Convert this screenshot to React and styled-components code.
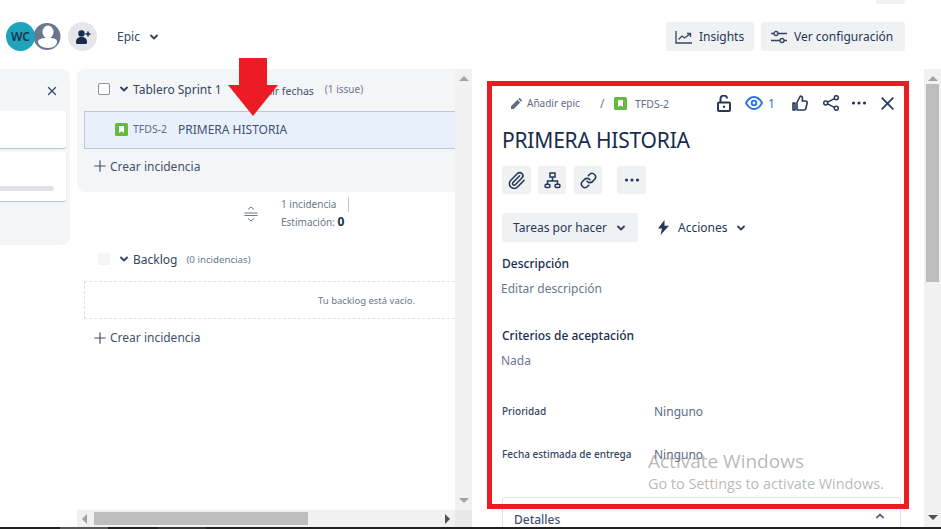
import React from 'react';
import styled, { createGlobalStyle } from 'styled-components';
import { Paperclip, Link, X, Plus } from 'lucide-react';

const GlobalStyle = createGlobalStyle`
  html, body {
    margin: 0;
    padding: 0;
    background: #fff;
    overflow: hidden;
  }
  * {
    box-sizing: border-box;
  }
`;

const Page = styled.div`
  position: relative;
  width: 941px;
  height: 529px;
  display: flex;
  flex-direction: column;
  overflow: hidden;
  font-family: "Noto Sans", "Open Sans", sans-serif;
  color: #172b4d;
`;

const TopBar = styled.header`
  height: 69px;
  flex: none;
  display: flex;
  align-items: flex-start;
  padding: 22px 36px 0 6px;
`;

const Avatars = styled.div`
  display: flex;
  align-items: center;
`;

const TealAvatar = styled.div`
  position: relative;
  z-index: 1;
  width: 29px;
  height: 29px;
  border-radius: 50%;
  background: #1fa3bd;
  color: #16334f;
  font-size: 12px;
  font-weight: 600;
  line-height: 29px;
  text-align: center;
`;

const PersonAvatar = styled.svg`
  width: 28px;
  height: 29px;
  margin-left: -2px;
  display: block;
`;

const AddButton = styled.div`
  width: 29px;
  height: 29px;
  margin-left: 7px;
  border-radius: 50%;
  background: #e4e6ea;
  display: flex;
  align-items: center;
  justify-content: center;
`;

const EpicFilter = styled.div`
  display: flex;
  align-items: center;
  gap: 9px;
  height: 29px;
  margin-left: 20px;
  font-size: 12px;
  color: #344563;
`;

const Spacer = styled.div`
  flex: 1;
`;

const TopButton = styled.div`
  display: flex;
  align-items: center;
  gap: 6px;
  width: ${p => p.$width}px;
  height: 29px;
  margin-left: ${p => p.$gap || 0}px;
  padding-left: 9px;
  border-radius: 3px;
  background: #f0f1f3;
  font-size: 12px;
  color: #253858;
`;

const TopTab = styled.div`
  position: absolute;
  top: 0;
  left: 876px;
  width: 29px;
  height: 4px;
  background: #f0f1f3;
  border-radius: 0 0 3px 3px;
`;

const Main = styled.main`
  flex: 1;
  min-height: 0;
  display: flex;
`;

const EpicPanel = styled.aside`
  width: 70px;
  height: 176px;
  flex: none;
  margin-right: 7px;
  padding: 42px 4px 0 0;
  background: #f4f5f7;
  border-radius: 0 8px 8px 0;
  position: relative;
`;

const PanelClose = styled(X)`
  position: absolute;
  top: 15px;
  right: 11px;
  color: #42526e;
`;

const EpicCard = styled.div`
  height: ${p => p.$height}px;
  margin-bottom: 4px;
  padding-top: ${p => p.$barTop || 0}px;
  background: #fff;
  border-radius: 0 3px 3px 0;
  box-shadow: 0 1px 1px rgba(9, 30, 66, 0.25);
`;

const CardBar = styled.div`
  width: 54px;
  height: 5px;
  background: #dfe1e6;
  border-radius: 0 3px 3px 0;
`;

const BacklogColumn = styled.section`
  width: 395px;
  flex: none;
  display: flex;
  flex-direction: column;
`;

const BacklogBody = styled.div`
  flex: 1;
  min-height: 0;
  display: flex;
`;

const BacklogContent = styled.div`
  width: 378px;
  flex: none;
`;

const SprintCard = styled.div`
  height: 123px;
  background: #f4f5f7;
  border-radius: 8px 0 0 8px;
  padding: 0 0 0 7px;
`;

const SectionHead = styled.div`
  display: flex;
  align-items: center;
  height: ${p => p.$height}px;
  padding: 0 0 2px ${p => p.$indent}px;
`;

const Check = styled.span`
  width: 12px;
  height: 12px;
  flex: none;
  background: ${p => (p.$muted ? '#f4f5f7' : '#fff')};
  border: ${p => (p.$muted ? '0' : '1px solid #8993a4')};
  border-radius: 2px;
  margin-right: 9px;
`;

const SectionName = styled.span`
  margin-left: 4px;
  font-size: 12px;
  color: #344563;
`;

const DateLink = styled.span`
  margin-left: 25px;
  padding-top: 4px;
  font-size: 10.5px;
  color: #42526e;
  white-space: nowrap;
`;

const Count = styled.span`
  margin-left: ${p => p.$gap}px;
  font-size: ${p => p.$size}px;
  color: #6b778c;
`;

const IssueRow = styled.div`
  display: flex;
  align-items: center;
  height: 38px;
  padding: 0 0 2px 30px;
  background: #e8f0fc;
  border: 1px solid #c1c7d0;
  border-right: 0;
`;

const IssueKey = styled.span`
  margin-left: 5px;
  width: 45px;
  font-size: 10.5px;
  color: #5e6c84;
`;

const IssueTitle = styled.span`
  font-size: 12px;
  color: #42526e;
`;

const CreateIssue = styled.div`
  display: flex;
  align-items: center;
  gap: 1px;
  height: ${p => p.$height}px;
  padding-left: ${p => p.$indent}px;
  font-size: 12px;
  color: #42526e;
`;

const Summary = styled.div`
  display: flex;
  height: 55px;
  padding: 5px 0 0 167px;
`;

const ResizeIcon = styled.svg`
  width: 14px;
  height: 18px;
  margin-top: 8px;
  margin-right: 23px;
  flex: none;
`;

const SummaryLines = styled.div`
  display: flex;
  flex-direction: column;
  gap: 2px;
  font-size: 10px;
  line-height: 15px;
  color: #6b778c;
`;

const SummaryCount = styled.div`
  width: 68px;
  height: 15px;
  border-right: 1px solid #c1c7d0;
`;

const Points = styled.b`
  font-size: 12px;
  color: #172b4d;
`;

const EmptyBox = styled.div`
  height: 38px;
  margin: 8px 0 0 7px;
  border: 1px dashed #dfe1e6;
  border-right: 0;
  padding: 0 0 0 233px;
  display: flex;
  align-items: center;
  font-size: 9.5px;
  color: #6b778c;
`;

const VScrollTrack = styled.div`
  width: 17px;
  flex: none;
  background: #f1f1f1;
  display: flex;
  flex-direction: column;
  justify-content: space-between;
  align-items: center;
  padding: 7px 0;
`;

const HScrollRow = styled.div`
  height: 17px;
  flex: none;
  display: flex;
  background: #f1f1f1;
`;

const HThumbTrack = styled.div`
  width: 378px;
  flex: none;
  display: flex;
  align-items: center;
  justify-content: space-between;
  padding: 0 5px;
`;

const HThumbWrap = styled.div`
  flex: 1;
  padding: 0 137px 0 7px;
`;

const HThumb = styled.div`
  height: 13px;
  background: #bdbdbd;
`;

const HCorner = styled.div`
  flex: 1;
  background: #e8e8e8;
`;

const DetailPanel = styled.section`
  width: 452px;
  flex: none;
  overflow: hidden;
  padding: 0 23px 0 30px;
`;

const Breadcrumbs = styled.div`
  display: flex;
  align-items: center;
  height: 68px;
  padding-left: 9px;
  font-size: 10px;
  color: #5e6c84;
`;

const BreadcrumbEpic = styled.span`
  margin-left: 5px;
  width: 73px;
`;

const Slash = styled.span`
  width: 14px;
  font-size: 12px;
  color: #6b778c;
`;

const BreadcrumbKey = styled.span`
  margin-left: 8px;
  width: 82px;
  padding-top: 2px;
  font-size: 10.5px;
`;

const DetailActions = styled.div`
  display: flex;
  align-items: center;
  color: #253858;
`;

const ActionSlot = styled.div`
  width: ${p => p.$width}px;
  display: flex;
  align-items: center;
  color: ${p => p.$color || '#253858'};
  font-size: 12px;
`;

const WatchCount = styled.span`
  margin-left: 5px;
`;

const Title = styled.h1`
  margin: -11px 0 0 0;
  font-size: 21px;
  font-weight: 400;
  line-height: 28px;
  letter-spacing: -0.2px;
  color: #172b4d;
`;

const IconRow = styled.div`
  display: flex;
  margin-top: 12px;
`;

const IconButton = styled.div`
  width: ${p => p.$width || 28}px;
  height: 28px;
  margin-right: ${p => p.$gap || 8}px;
  border-radius: 3px;
  background: #f0f1f3;
  color: #253858;
  display: flex;
  align-items: center;
  justify-content: center;
`;

const StatusRow = styled.div`
  display: flex;
  align-items: center;
  margin-top: 19px;
  height: 29px;
`;

const StatusButton = styled.div`
  width: 136px;
  height: 29px;
  display: flex;
  align-items: center;
  gap: 9px;
  padding-left: 11px;
  background: #f0f1f3;
  border-radius: 3px;
  font-size: 12px;
  color: #253858;
  white-space: nowrap;
`;

const ActionsMenu = styled.div`
  display: flex;
  align-items: center;
  margin-left: 20px;
  font-size: 12px;
  color: #253858;
`;

const ActionsLabel = styled.span`
  margin: 0 9px;
`;

const FieldLabel = styled.div`
  margin-top: ${p => p.$top}px;
  font-size: 12px;
  line-height: 18px;
  font-weight: 500;
  color: #172b4d;
`;

const FieldValue = styled.div`
  margin: 7px 0 0 -1px;
  font-size: 12px;
  line-height: 18px;
  color: #6b778c;
`;

const MetaRow = styled.div`
  display: flex;
  align-items: center;
  height: 18px;
  margin-top: ${p => p.$top}px;
`;

const MetaLabel = styled.span`
  width: 152px;
  font-size: 10px;
  font-weight: 500;
  color: #344563;
  white-space: nowrap;
`;

const MetaValue = styled.span`
  font-size: 12px;
  color: #5e6c84;
`;

const DetailsCard = styled.div`
  height: 60px;
  margin-top: 34px;
  padding: 13px 15px 0 11px;
  border: 1px solid #dfe1e6;
  border-radius: 3px 3px 0 0;
  display: flex;
  align-items: flex-start;
  justify-content: space-between;
  font-size: 12px;
  font-weight: 500;
  color: #42526e;
`;

const PageScroll = styled.div`
  width: 17px;
  flex: none;
  background: #f1f1f1;
  display: flex;
  flex-direction: column;
  align-items: center;
  padding: 7px 0;
`;

const PageThumb = styled.div`
  width: 13px;
  height: 198px;
  margin: 3px 0 auto;
  background: #bdbdbd;
`;

const Taskbar = styled.footer`
  height: 2px;
  flex: none;
  display: flex;
  background: #202020;
`;

const TaskbarSlot = styled.div`
  width: 48px;
  margin-left: ${p => p.$gap}px;
  background: ${p => p.$color};
`;

const RedFrame = styled.div`
  position: absolute;
  left: 487px;
  top: 81px;
  width: 422px;
  height: 428px;
  border: 5px solid #ed1c24;
  pointer-events: none;
`;

const RedArrow = styled.svg`
  position: absolute;
  left: 228px;
  top: 58px;
  width: 50px;
  height: 58px;
`;

const Watermark = styled.div`
  position: absolute;
  left: 648px;
  top: 448px;
  font-family: "Open Sans", sans-serif;
  color: rgba(140, 140, 140, 0.62);
  pointer-events: none;
`;

const WatermarkTitle = styled.div`
  font-size: 19px;
  line-height: 26px;
`;

const WatermarkText = styled.div`
  font-size: 14.4px;
  line-height: 20px;
`;

const Chevron = ({ up, color = '#344563' }) => (
  <svg width="10" height="10" viewBox="0 0 10 10" style={{ flex: 'none' }}>
    <path d={up ? 'M2 6.500 5 3.500 8 6.500' : 'M2 3.500 5 6.500 8 3.500'} fill="none" stroke={color} strokeWidth="1.900" strokeLinecap="round" strokeLinejoin="round" />
  </svg>
);

const StoryIcon = () => (
  <svg width="13" height="13" viewBox="0 0 13 13" style={{ flex: 'none' }}>
    <rect width="13" height="13" rx="1.500" fill="#63ba3c" />
    <path d="M4 3h5v7L6.500 8.200 4 10z" fill="#fff" />
  </svg>
);

const Dots = () => (
  <svg width="16" height="6" viewBox="0 0 16 6">
    <circle cx="2.500" cy="3" r="1.600" fill="#253858" />
    <circle cx="8" cy="3" r="1.600" fill="#253858" />
    <circle cx="13.500" cy="3" r="1.600" fill="#253858" />
  </svg>
);

const Arrow = ({ dir, color = '#a3a3a3' }) => {
  const points = {
    up: '0,5 5,0 10,5',
    down: '0,0 10,0 5,5',
    left: '5,0 5,10 0,5',
    right: '0,0 0,10 5,5',
  }[dir];
  const vertical = dir === 'up' || dir === 'down';
  return (
    <svg width={vertical ? 10 : 5} height={vertical ? 5 : 10} style={{ flex: 'none' }}>
      <polygon points={points} fill={color} />
    </svg>
  );
};

export default function App() {
  return (
    <Page>
      <GlobalStyle />
      <TopBar>
        <Avatars>
          <TealAvatar>WC</TealAvatar>
          <PersonAvatar viewBox="0 0 28 29">
            <circle cx="14" cy="14.500" r="13.500" fill="#6b778c" />
            <ellipse cx="15" cy="10" rx="5.500" ry="6.500" fill="#fff" />
            <path d="M5 20c0-3 3-4 10-4s9 1 9 4c0 3-4 6-9 6s-10-3-10-6z" fill="#fff" />
          </PersonAvatar>
        </Avatars>
        <AddButton>
          <svg width="16" height="16" viewBox="0 0 16 16">
            <circle cx="6.500" cy="4.500" r="3.200" fill="#172b4d" />
            <path d="M1 13c0-3.500 2.200-5 5.500-5s5.500 1.500 5.500 5v.8c0 .7-.5 1.200-1.200 1.200H2.200C1.500 15 1 14.500 1 13.800z" fill="#172b4d" />
            <path d="M13 2.500v5M10.500 5h5" stroke="#172b4d" strokeWidth="1.500" />
          </svg>
        </AddButton>
        <EpicFilter>
          Epic
          <Chevron />
        </EpicFilter>
        <Spacer />
        <TopButton $width={88}>
          <svg width="18" height="14" viewBox="0 0 18 14" fill="none" stroke="#344563" strokeWidth="1.300">
            <path d="M1 1v12h16" />
            <path d="M3.500 9.500 7 6l2.500 2L15 4" />
            <path d="M12 3.500h3.500V7" />
          </svg>
          Insights
        </TopButton>
        <TopButton $width={144} $gap={7}>
          <svg width="18" height="14" viewBox="0 0 18 14" fill="none" stroke="#344563" strokeWidth="1.300">
            <path d="M1 3.500h3M8 3.500h9M1 10.500h9M14 10.500h3" />
            <circle cx="6" cy="3.500" r="2" />
            <circle cx="12" cy="10.500" r="2" />
          </svg>
          Ver configuración
        </TopButton>
      </TopBar>
      <TopTab />

      <Main>
        <EpicPanel>
          <PanelClose size={14} strokeWidth={2.500} />
          <EpicCard $height={37} />
          <EpicCard $height={49} $barTop={34}>
            <CardBar />
          </EpicCard>
        </EpicPanel>

        <BacklogColumn>
          <BacklogBody>
            <BacklogContent>
              <SprintCard>
                <SectionHead $height={42} $indent={14}>
                  <Check />
                  <Chevron />
                  <SectionName>Tablero Sprint 1</SectionName>
                  <DateLink>Añadir fechas</DateLink>
                  <Count $gap={11} $size={10}>(1 issue)</Count>
                </SectionHead>
                <IssueRow>
                  <StoryIcon />
                  <IssueKey>TFDS-2</IssueKey>
                  <IssueTitle>PRIMERA HISTORIA</IssueTitle>
                </IssueRow>
                <CreateIssue $height={34} $indent={7}>
                  <Plus size={18} strokeWidth={1.600} />
                  Crear incidencia
                </CreateIssue>
              </SprintCard>
              <Summary>
                <ResizeIcon viewBox="0 0 14 18" fill="none" stroke="#6b778c" strokeWidth="1">
                  <path d="M4 4.500 7 2l3 2.500M0.500 8h13M0.500 10.500h13M4 13.500 7 16l3-2.500" />
                </ResizeIcon>
                <SummaryLines>
                  <SummaryCount>1 incidencia</SummaryCount>
                  <div>
                    Estimación: <Points>0</Points>
                  </div>
                </SummaryLines>
              </Summary>
              <SectionHead $height={26} $indent={21}>
                <Check $muted />
                <Chevron />
                <SectionName>Backlog</SectionName>
                <Count $gap={9} $size={9.7}>(0 incidencias)</Count>
              </SectionHead>
              <EmptyBox>Tu backlog está vacío.</EmptyBox>
              <CreateIssue $height={37} $indent={14}>
                <Plus size={18} strokeWidth={1.600} />
                Crear incidencia
              </CreateIssue>
            </BacklogContent>
            <VScrollTrack>
              <Arrow dir="up" />
              <Arrow dir="down" />
            </VScrollTrack>
          </BacklogBody>
          <HScrollRow>
            <HThumbTrack>
              <Arrow dir="left" />
              <HThumbWrap>
                <HThumb />
              </HThumbWrap>
              <Arrow dir="right" color="#505050" />
            </HThumbTrack>
            <HCorner />
          </HScrollRow>
        </BacklogColumn>

        <DetailPanel>
          <Breadcrumbs>
            <svg width="11" height="11" viewBox="0 0 11 11" style={{ flex: 'none' }}>
              <path d="M0 11V8.300L6.500 1.800l2.700 2.700L2.700 11zM7.300 1 8.100.200c.3-.3.700-.3 1 0L10.800 1.900c.3.3.3.700 0 1L10 3.700z" fill="#5e6c84" />
            </svg>
            <BreadcrumbEpic>Añadir epic</BreadcrumbEpic>
            <Slash>/</Slash>
            <StoryIcon />
            <BreadcrumbKey>TFDS-2</BreadcrumbKey>
            <DetailActions>
              <ActionSlot $width={28}>
                <svg width="14" height="17" viewBox="0 0 14 17" fill="none" stroke="currentColor" strokeWidth="2">
                  <rect x="1" y="7.500" width="12" height="8.500" rx="1" />
                  <path d="M3.500 7.500V4a3.300 3.300 0 0 1 6.600-.5" />
                  <circle cx="7" cy="11.800" r="1.200" fill="currentColor" stroke="none" />
                </svg>
              </ActionSlot>
              <ActionSlot $width={47} $color="#2670e8">
                <svg width="18" height="14" viewBox="0 0 18 14" fill="none" stroke="currentColor" strokeWidth="1.800">
                  <path d="M1 7c2-3.800 5-6 8-6s6 2.200 8 6c-2 3.800-5 6-8 6s-6-2.200-8-6z" />
                  <circle cx="9" cy="7" r="2.300" />
                </svg>
                <WatchCount>1</WatchCount>
              </ActionSlot>
              <ActionSlot $width={31}>
                <svg width="16" height="16" viewBox="0 0 16 16" fill="none" stroke="currentColor" strokeWidth="1.600" strokeLinejoin="round">
                  <path d="M5 7.500 8.300 1c1.500 0 2.300 1 2.200 2.500L10.200 6h3.300c1.200 0 1.900.9 1.600 2l-1.200 5.500c-.2.900-.9 1.500-1.800 1.500H5z" />
                  <path d="M1 8h2v7H1z" />
                </svg>
              </ActionSlot>
              <ActionSlot $width={28}>
                <svg width="16" height="16" viewBox="0 0 16 16" fill="none" stroke="currentColor" strokeWidth="1.500">
                  <circle cx="13.300" cy="2.700" r="2" />
                  <circle cx="2.700" cy="8" r="2" />
                  <circle cx="13.300" cy="13.300" r="2" />
                  <path d="M4.500 7.100 11.500 3.600M4.500 8.900l7 3.500" />
                </svg>
              </ActionSlot>
              <ActionSlot $width={30}>
                <Dots />
              </ActionSlot>
              <ActionSlot $width={14}>
                <svg width="13" height="13" viewBox="0 0 13 13" fill="none" stroke="currentColor" strokeWidth="1.700">
                  <path d="M.7.700l11.600 11.600M12.300.700.7 12.300" />
                </svg>
              </ActionSlot>
            </DetailActions>
          </Breadcrumbs>
          <Title>PRIMERA HISTORIA</Title>
          <IconRow>
            <IconButton $width={29} $gap={7}>
              <Paperclip size={19} strokeWidth={2} />
            </IconButton>
            <IconButton $gap={8}>
              <svg width="17" height="17" viewBox="0 0 17 17" fill="none" stroke="#253858" strokeWidth="1.500">
                <rect x="6" y="1" width="5" height="4" />
                <path d="M8.500 5v4M3.500 12V9h10v3" />
                <rect x="1" y="12.200" width="5" height="3.300" rx="1.500" />
                <rect x="11" y="12.200" width="5" height="3.300" rx="1.500" />
              </svg>
            </IconButton>
            <IconButton $gap={15}>
              <Link size={17} strokeWidth={2.200} />
            </IconButton>
            <IconButton $width={29}>
              <Dots />
            </IconButton>
          </IconRow>
          <StatusRow>
            <StatusButton>
              Tareas por hacer
              <Chevron />
            </StatusButton>
            <ActionsMenu>
              <svg width="11" height="15" viewBox="0 0 11 15">
                <path d="M6.500 0 0 8.500h4L2.500 15 11 5.800H6.500z" fill="#253858" />
              </svg>
              <ActionsLabel>Acciones</ActionsLabel>
              <Chevron />
            </ActionsMenu>
          </StatusRow>
          <FieldLabel $top={13}>Descripción</FieldLabel>
          <FieldValue>Editar descripción</FieldValue>
          <FieldLabel $top={29}>Criterios de aceptación</FieldLabel>
          <FieldValue>Nada</FieldValue>
          <MetaRow $top={32}>
            <MetaLabel>Prioridad</MetaLabel>
            <MetaValue>Ninguno</MetaValue>
          </MetaRow>
          <MetaRow $top={25}>
            <MetaLabel>Fecha estimada de entrega</MetaLabel>
            <MetaValue>Ninguno</MetaValue>
          </MetaRow>
          <DetailsCard>
            Detalles
            <Chevron up color="#5e6c84" />
          </DetailsCard>
        </DetailPanel>

        <PageScroll>
          <Arrow dir="up" />
          <PageThumb />
          <Arrow dir="down" color="#505050" />
        </PageScroll>
      </Main>

      <Taskbar>
        <TaskbarSlot $gap={60} $color="#555" />
        <TaskbarSlot $gap={50} $color="#333" />
      </Taskbar>

      <RedFrame />
      <RedArrow viewBox="0 0 50 58">
        <polygon points="11,0 39,0 39,27 50,27 25,58 0,27 11,27" fill="#ed1c24" />
      </RedArrow>
      <Watermark>
        <WatermarkTitle>Activate Windows</WatermarkTitle>
        <WatermarkText>Go to Settings to activate Windows.</WatermarkText>
      </Watermark>
    </Page>
  );
}
